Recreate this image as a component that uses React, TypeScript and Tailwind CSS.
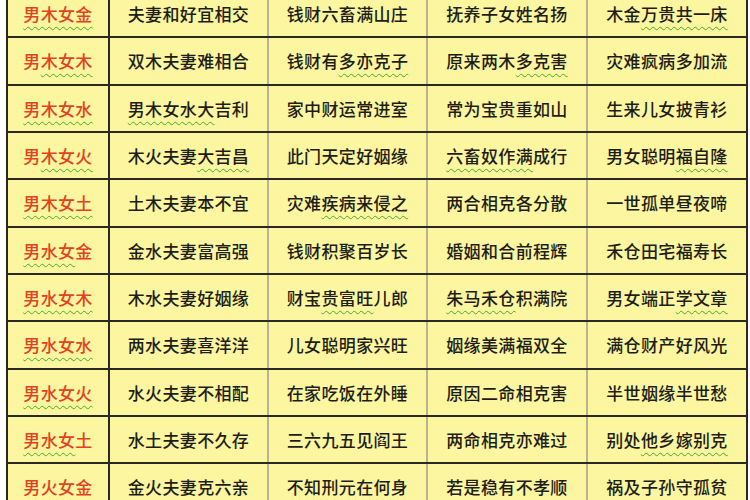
import React from 'react';

// "{...}" marks the part that carries the green spell-check squiggle
const rows: string[][] = [
  ['{男木女金}', '夫妻和好宜相交', '钱财六畜满山庄', '抚养子女姓名扬', '木金{万贵共一床}'],
  ['男{木女木}', '双木夫妻难相合', '钱财有{多亦克子}', '原来两木{多克害}', '灾难疯病多加流'],
  ['{男木女水}', '{男木女水大}吉利', '家中财运常进室', '常为宝贵重如山', '生来儿女披青衫'],
  ['男{木女火}', '木火夫妻{大吉昌}', '此门天定好姻缘', '{六畜奴作满}成行', '男女聪明{福自隆}'],
  ['{男木女土}', '土木夫妻本不宜', '灾难{疾病来侵之}', '两合相克各分散', '一世孤单昼夜啼'],
  ['{男水女}金', '金水夫妻富高强', '钱财积聚百岁长', '婚姻和合前程辉', '禾仓田宅福寿长'],
  ['{男水女木}', '木水夫妻好姻缘', '财宝{贵富旺}儿郎', '{朱马禾仓}积满院', '男女端正{学文章}'],
  ['{男水女水}', '两水夫妻喜洋洋', '儿女聪明家兴旺', '姻缘美满福双全', '满仓财产好风光'],
  ['{男水女火}', '水火夫妻不相配', '在家吃饭在外睡', '原因二命相克害', '半世姻缘半世愁'],
  ['{男水女}土', '水土夫妻不久存', '三六九五见阎王', '两命相克亦难过', '别处{他乡嫁别克}'],
  ['{男火女}金', '金火夫妻克六亲', '{不知刑元在何身}', '若是稳有不孝顺', '祸及子孙守孤贫'],
];

const cellClasses = [
  'w-[102px] border-r-2 border-[#2b2a22] text-[#e2421f]',
  'w-[159px] border-r-2 border-[#b9b48e] text-[#1e1d17]',
  'w-[159px] border-r-2 border-[#b9b48e] text-[#1e1d17]',
  'w-[160px] border-r-2 border-[#b9b48e] text-[#1e1d17]',
  'w-[158px] text-[#1e1d17]',
];

const Cell = ({ text, idx }: { text: string; idx: number }) => {
  const parts = text.split(/[{}]/);
  return (
    <div className={`${cellClasses[idx]} flex items-center justify-center shrink-0`}>
      <span className="text-[17px] tracking-[0.35px] font-medium leading-none">
        {parts.map((p, i) =>
          i % 2 === 1 ? (
            <span
              key={i}
              className="underline decoration-wavy decoration-[#3fae2c] decoration-1 underline-offset-[5px]"
            >
              {p}
            </span>
          ) : (
            <span key={i}>{p}</span>
          )
        )}
      </span>
    </div>
  );
};

export default function App() {
  return (
    <div
      className="w-[750px] h-[500px] overflow-hidden bg-white"
      style={{ fontFamily: '"Noto Sans CJK SC", "Noto Sans", sans-serif' }}
    >
      <div className="ml-[6px] mt-[-9px] w-[742px] border-x-2 border-[#2b2a22] bg-[#fbf69f]">
        {rows.map((row, r) => (
          <div key={r} className="flex h-[47.33px] border-b-2 border-[#2b2a22]">
            {row.map((c, i) => (
              <Cell key={i} text={c} idx={i} />
            ))}
          </div>
        ))}
      </div>
    </div>
  );
}
